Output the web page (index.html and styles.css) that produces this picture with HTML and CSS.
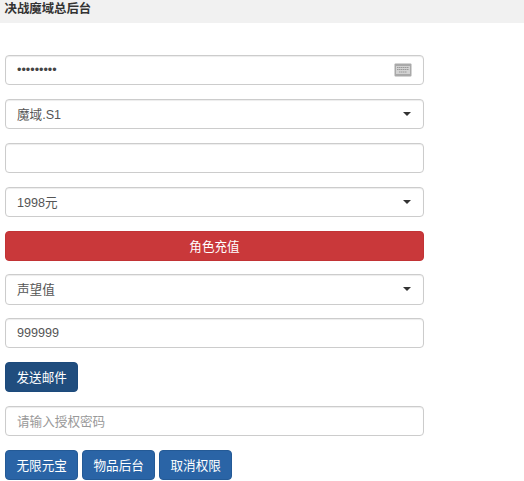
FILE: index.html
```html
<!DOCTYPE html>
<html lang="zh-CN">
<head>
<meta charset="utf-8">
<title>决战魔域总后台</title>
<link rel="stylesheet" href="styles.css">
</head>
<body>
<header class="topbar">决战魔域总后台</header>
<main class="form">
  <div class="field">
    <span class="value dots">•••••••••</span>
    <svg class="kbd" width="18" height="14" viewBox="0 0 18 14" aria-hidden="true">
      <rect x="0.5" y="0.5" width="17" height="13" rx="1" fill="#a9a9a9"/>
      <path d="M2 3h14v8H2z" fill="#d2d2d2"/>
      <path d="M3 4.5h12M3 6.5h12M5 9h8" stroke="#9a9a9a" stroke-width="1" stroke-dasharray="1.5 .5" fill="none"/>
    </svg>
  </div>
  <div class="field"><span class="value">魔域.S1</span><i class="caret"></i></div>
  <div class="field"></div>
  <div class="field"><span class="value">1998元</span><i class="caret"></i></div>
  <button class="btn btn-red" type="button">角色充值</button>
  <div class="field"><span class="value">声望值</span><i class="caret"></i></div>
  <div class="field"><span class="value">999999</span></div>
  <div class="row"><button class="btn btn-navy" type="button">发送邮件</button></div>
  <div class="field"><span class="value hint">请输入授权密码</span></div>
  <div class="row">
    <button class="btn btn-blue" type="button">无限元宝</button>
    <button class="btn btn-blue" type="button">物品后台</button>
    <button class="btn btn-blue" type="button">取消权限</button>
  </div>
</main>
</body>
</html>
```
FILE: styles.css
```css
* { box-sizing: border-box; }
html, body { margin: 0; padding: 0; background: #fff; }
body {
  font-family: "Liberation Sans", "Noto Sans CJK SC", sans-serif;
  font-size: 12.6px;
  color: #555;
  overflow: hidden;
  height: 481px;
}
.topbar {
  height: 23px;
  background: #f1f1f1;
  padding: 0 4.5px;
  line-height: 18px;
  font-size: 12.4px;
  font-weight: bold;
  color: #333;
}
.form {
  width: 429px;
  padding: 32px 5px 0;
  display: flex;
  flex-direction: column;
  gap: 13.7px;
}
.field {
  height: 30.2px;
  flex: none;
  border: 1px solid #ccc;
  border-radius: 4px;
  box-shadow: inset 0 1px 1px rgba(0,0,0,.075);
  padding: 0 12px 1px 11px;
  display: flex;
  align-items: center;
  justify-content: space-between;
  background: #fff;
}
.value { color: #555; }
.dots { color: #444; }
.hint { color: #999; }
.kbd { margin: 1px -1px 0 0; }
.caret {
  width: 0;
  height: 0;
  margin-top: 1px;
  border-left: 4px solid transparent;
  border-right: 4px solid transparent;
  border-top: 4px solid #333;
}
.row { display: flex; gap: 3.6px; }
.btn {
  font: inherit;
  color: #fff;
  height: 30.2px;
  flex: none;
  padding: 0 10.5px 1px;
  border-radius: 4px;
  border: 1px solid transparent;
}
.btn-red { background: #c9383a; border-color: #c23335; }
.btn-navy { background: #204d7e; border-color: #1c4a7c; }
.btn-blue { background: #2a64a6; border-color: #245a96; }
```
